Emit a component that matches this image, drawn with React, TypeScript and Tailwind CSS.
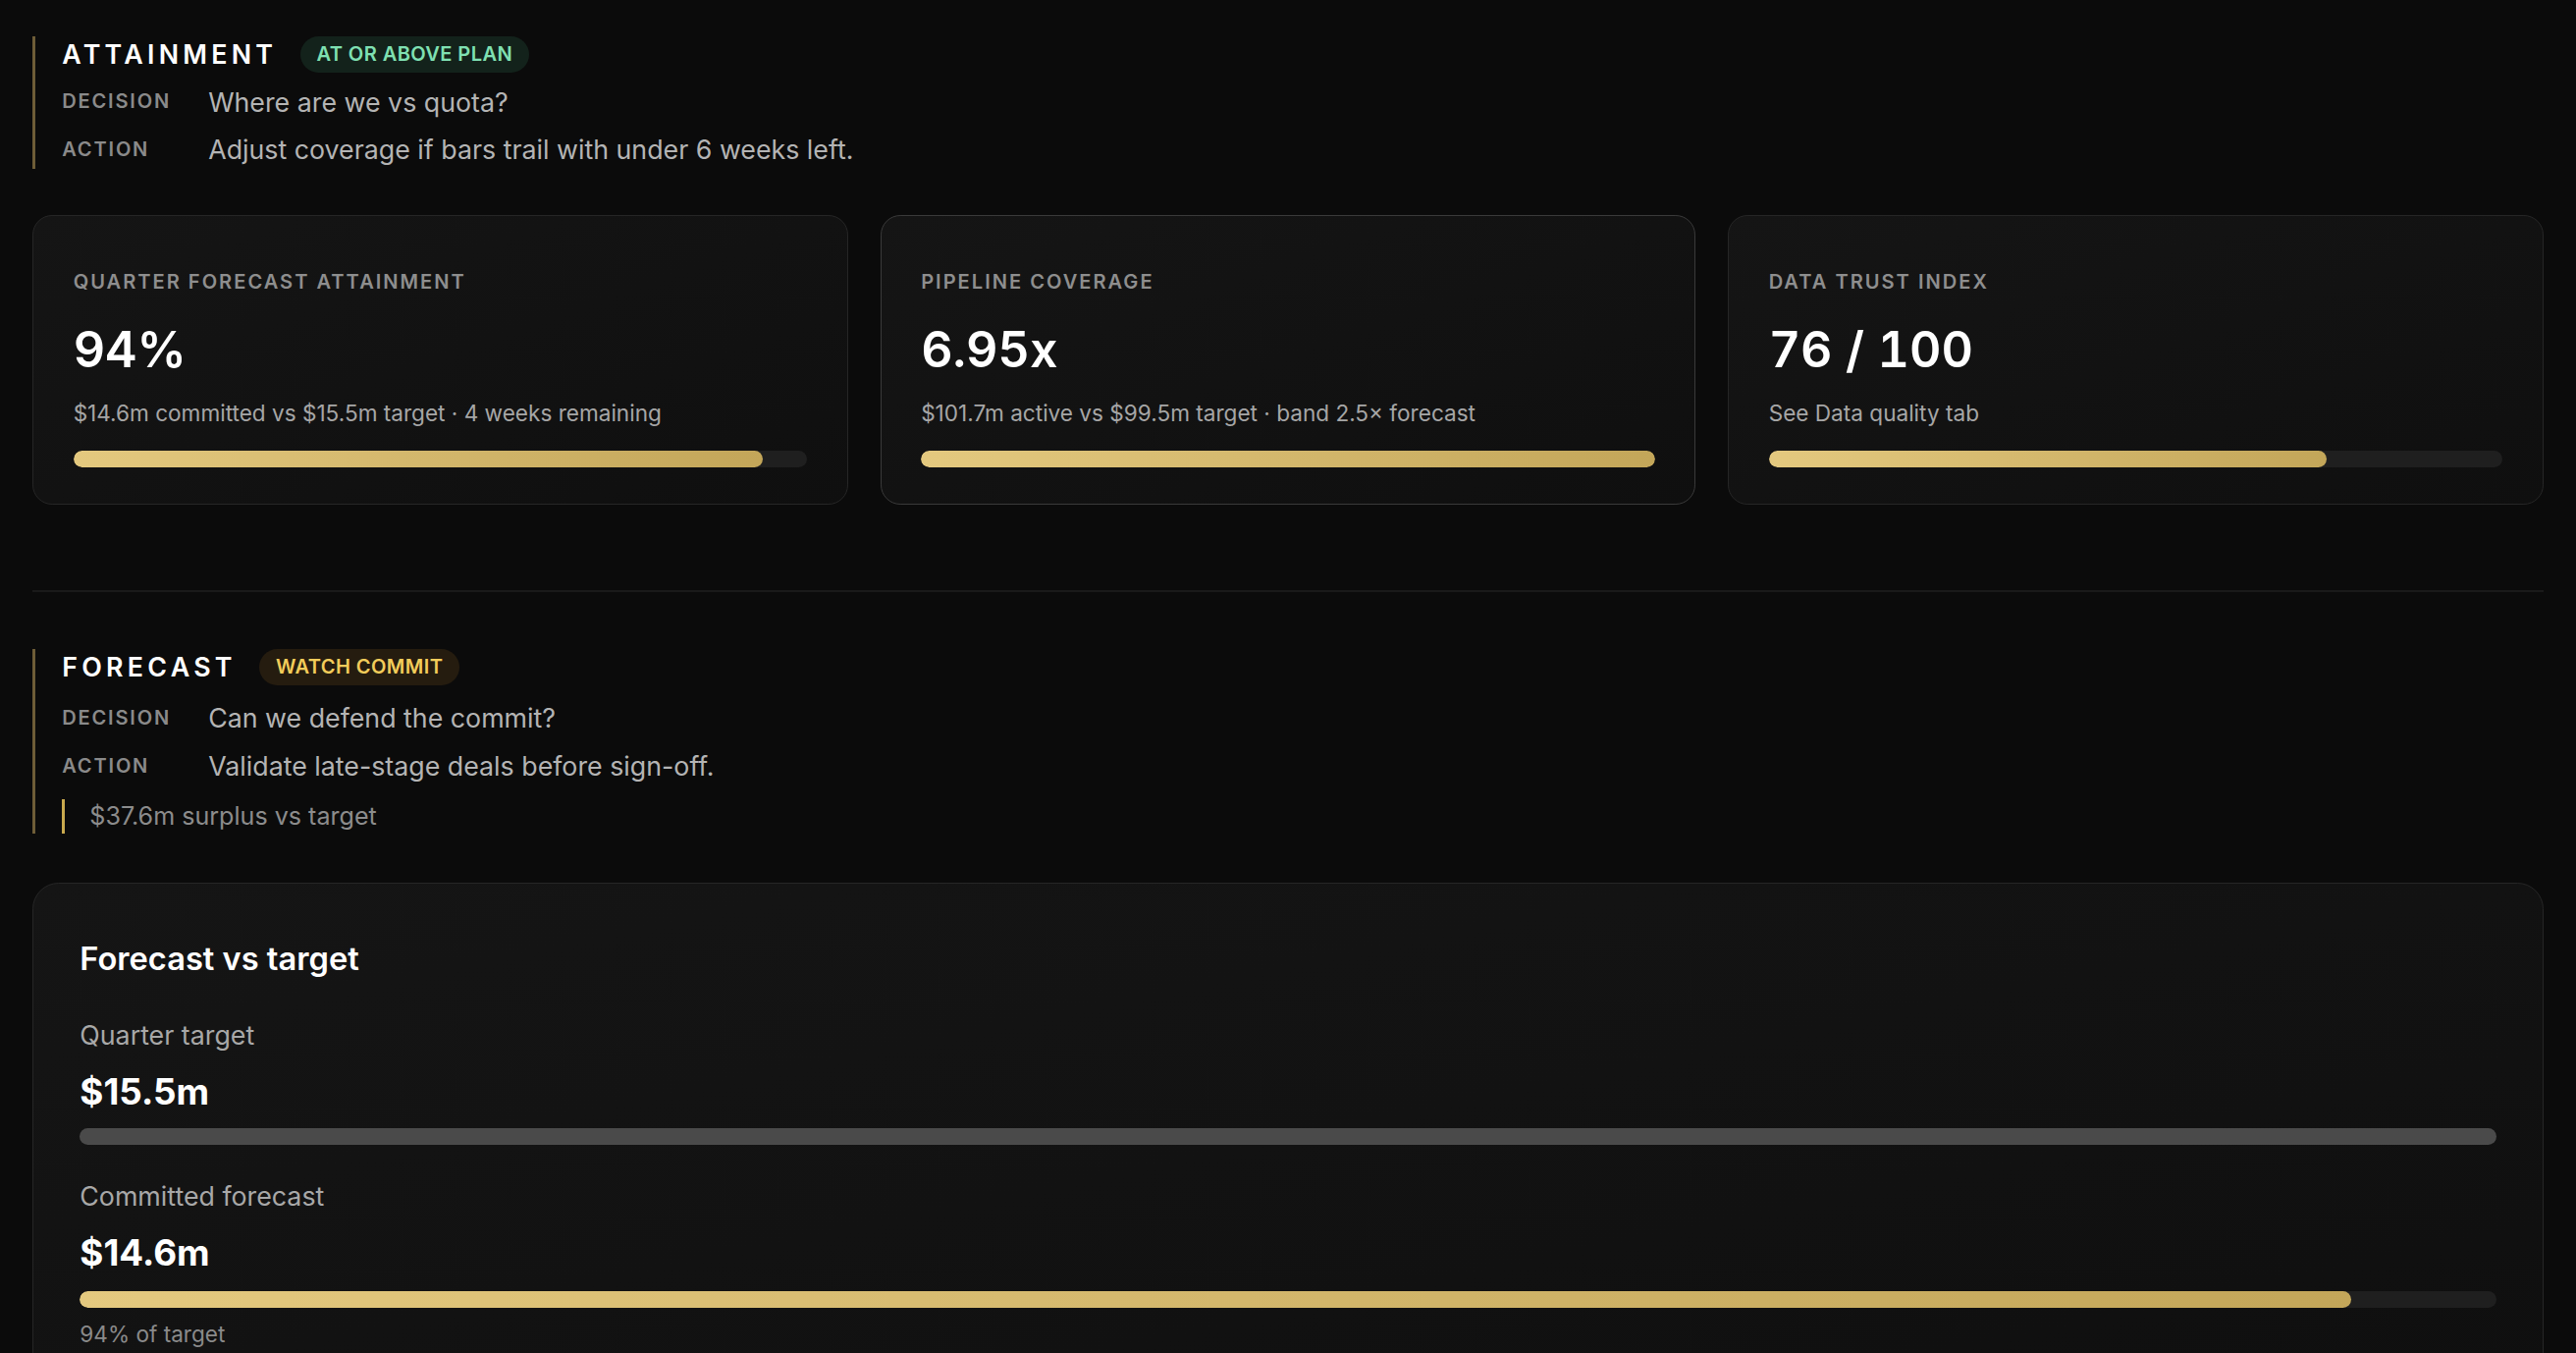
import React from "react";

type Tone = "green" | "amber";

function Badge({ tone, children }: { tone: Tone; children: React.ReactNode }) {
  const cls =
    tone === "green"
      ? "bg-[#13221b] text-[#7fe0b2]"
      : "bg-[#251c0f] text-[#f2cc5a]";
  return (
    <span className={`rounded-full px-2.5 py-[3px] text-xs font-semibold leading-4 tracking-[0.02em] ${cls}`}>
      {children}
    </span>
  );
}

function Row({ label, text }: { label: string; text: string }) {
  return (
    <div className="flex items-center">
      <span className="w-[89px] shrink-0 text-xs font-semibold tracking-[0.09em] text-[#8a8a8a]">
        {label}
      </span>
      <span className="text-base leading-6 text-[#b4b4b4]">{text}</span>
    </div>
  );
}

function SectionHeader({
  title,
  badge,
  tone,
  decision,
  action,
  note,
}: {
  title: string;
  badge: string;
  tone: Tone;
  decision: string;
  action: string;
  note?: string;
}) {
  return (
    <div className="border-l-2 border-[#6e5d37] pl-4">
      <div className="flex h-[22px] items-center gap-3.5">
        <h2 className="text-base font-semibold leading-none tracking-[0.16em] text-white">{title}</h2>
        <Badge tone={tone}>{badge}</Badge>
      </div>
      <div className={`flex flex-col gap-[5px] ${note ? "mt-2" : "mt-1.5"}`}>
        <Row label="DECISION" text={decision} />
        <Row label="ACTION" text={action} />
      </div>
      {note && (
        <div className="mt-2 border-l-2 border-[#c9a94e] pl-[15px] text-[15px] leading-[21px] text-[#8c8c8c]">
          {note}
        </div>
      )}
    </div>
  );
}

function GoldBar({ pct, track = "bg-[#1f1f1f]" }: { pct: number; track?: string }) {
  return (
    <div className={`h-2.5 w-full overflow-hidden rounded-full ${track}`}>
      <div
        className="h-full rounded-full bg-linear-to-r from-[#e4c97f] to-[#c3a659]"
        style={{ width: `${pct}%` }}
      />
    </div>
  );
}

function MetricCard({
  label,
  value,
  sub,
  pct,
  active,
}: {
  label: string;
  value: string;
  sub: string;
  pct: number;
  active?: boolean;
}) {
  return (
    <div
      className={`rounded-xl border bg-linear-to-br from-[#151515] to-[#0f0f0f] px-6 pt-8 pb-[22px] ${
        active ? "border-[#3a3a3a]" : "border-[#262626]"
      }`}
    >
      <div className="text-xs font-semibold leading-4 tracking-[0.1em] text-[#8e8e8e]">{label}</div>
      <div className="mt-[15px] text-3xl font-semibold leading-9 text-white tabular-nums">{value}</div>
      <div className="mt-3 text-[13.5px] leading-[18px] text-[#a6a6a6]">{sub}</div>
      <div className="mt-3.5">
        <GoldBar pct={pct} />
      </div>
    </div>
  );
}

export default function App() {
  return (
    <div className="min-h-screen overflow-hidden bg-[#0b0b0b] font-['Inter','Noto_Sans',sans-serif]">
      <div className="px-5 pt-[22px] pb-10 [zoom:1.6735]">
        <SectionHeader
          title="ATTAINMENT"
          badge="AT OR ABOVE PLAN"
          tone="green"
          decision="Where are we vs quota?"
          action="Adjust coverage if bars trail with under 6 weeks left."
        />

        <div className="mt-7 grid grid-cols-3 gap-5">
          <MetricCard
            label="QUARTER FORECAST ATTAINMENT"
            value="94%"
            sub="$14.6m committed vs $15.5m target · 4 weeks remaining"
            pct={94}
          />
          <MetricCard
            label="PIPELINE COVERAGE"
            value="6.95x"
            sub="$101.7m active vs $99.5m target · band 2.5× forecast"
            pct={100}
            active
          />
          <MetricCard label="DATA TRUST INDEX" value="76 / 100" sub="See Data quality tab" pct={76} />
        </div>

        <div className="mt-[52px] h-px bg-[#1a1a1a]" />

        <div className="mt-[35px]">
          <SectionHeader
            title="FORECAST"
            badge="WATCH COMMIT"
            tone="amber"
            decision="Can we defend the commit?"
            action="Validate late-stage deals before sign-off."
            note="$37.6m surplus vs target"
          />
        </div>

        <div className="mt-[30px] rounded-2xl border border-[#262626] bg-linear-to-br from-[#151515] to-[#0f0f0f] px-7 pt-8 pb-8">
          <h3 className="text-[19.5px] font-semibold leading-7 text-white">Forecast vs target</h3>

          <div className="mt-5 text-base leading-6 text-[#a8a8a8]">Quarter target</div>
          <div className="mt-[9px] text-[22px] font-bold leading-7 text-white">$15.5m</div>
          <div className="mt-2 h-2.5 w-full rounded-full bg-[#4a4a4a]" />

          <div className="mt-[19px] text-base leading-6 text-[#a8a8a8]">Committed forecast</div>
          <div className="mt-[9px] text-[22px] font-bold leading-7 text-white">$14.6m</div>
          <div className="mt-[9px]">
            <GoldBar pct={94} />
          </div>
          <div className="mt-1.5 text-[13.5px] leading-5 text-[#8a8a8a]">94% of target</div>
        </div>
      </div>
    </div>
  );
}
